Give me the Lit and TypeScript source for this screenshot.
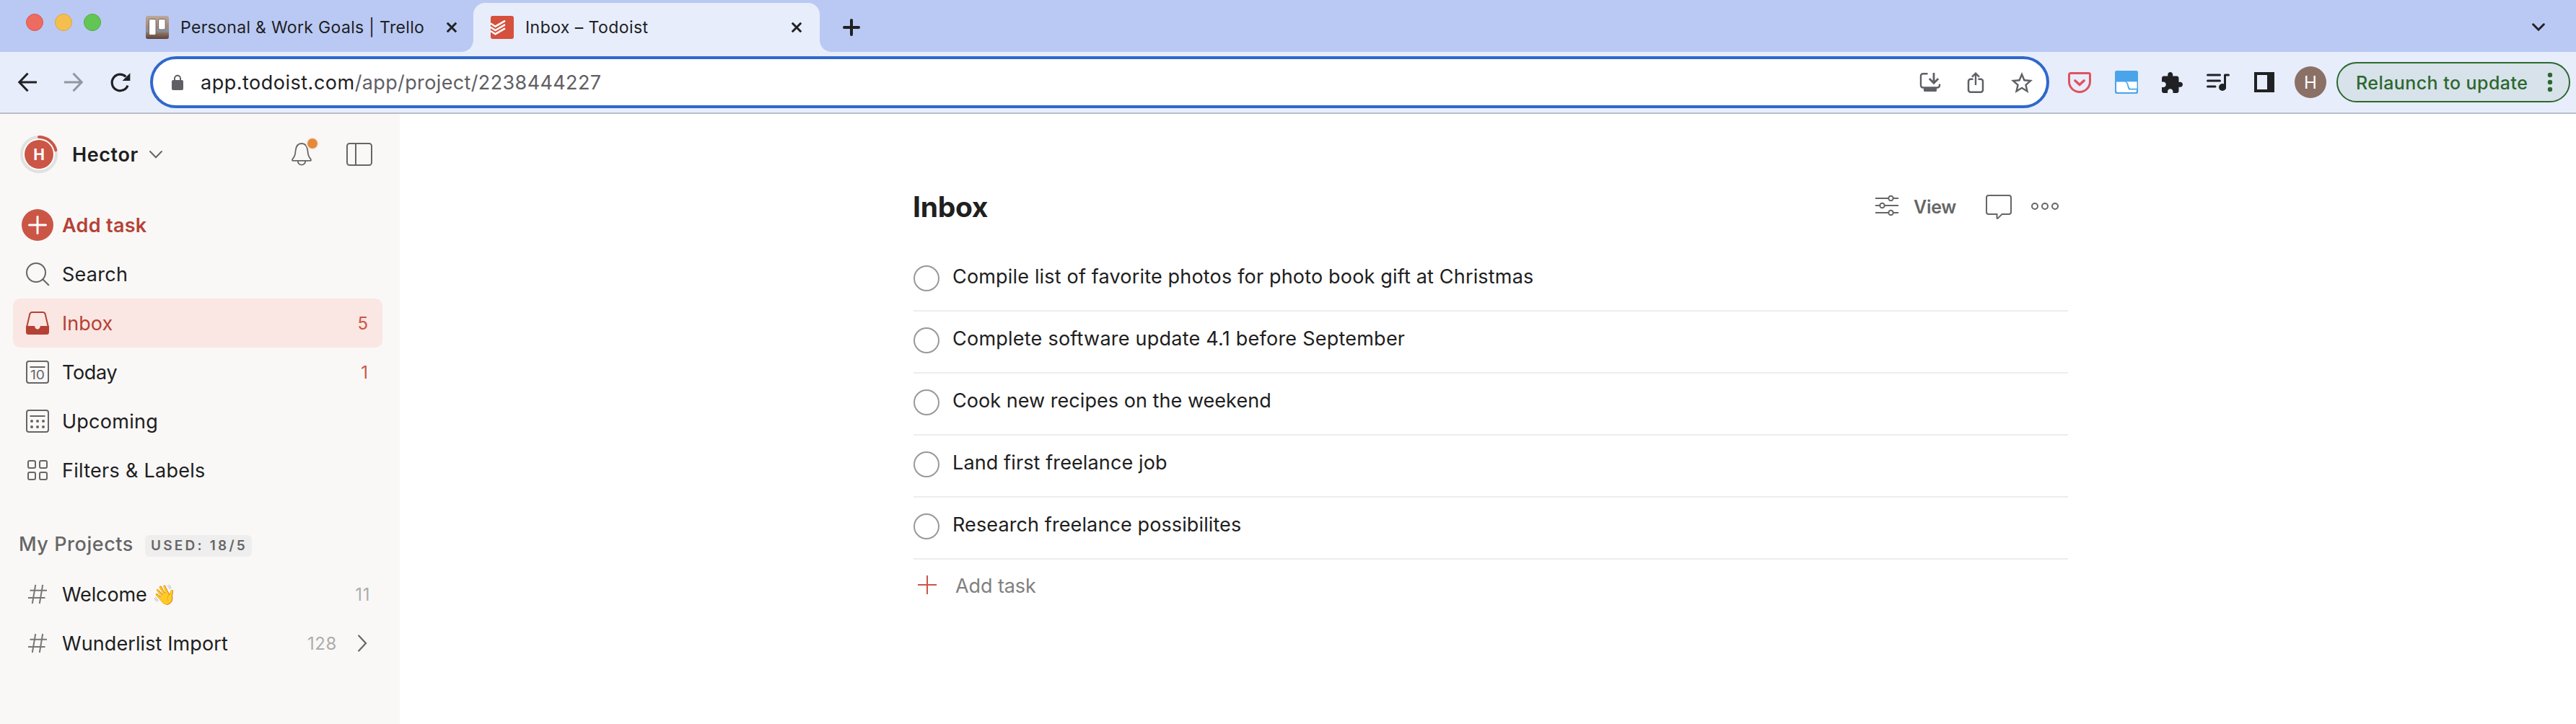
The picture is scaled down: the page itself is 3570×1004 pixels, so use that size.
import { LitElement, html, svg, css, nothing, TemplateResult } from "lit";
import { customElement } from "lit/decorators.js";
import { classMap } from "lit/directives/class-map.js";

const base = css`
  :host { display: block; font-family: Inter, "Liberation Sans", sans-serif; color: #202020; box-sizing: border-box; }
  * { box-sizing: border-box; }
  svg { display: block; flex: none; overflow: visible; fill: none; }
  .text { white-space: nowrap; }
`;

const icon = (w: number, h: number, body: TemplateResult, box = `0 0 ${w} ${h}`) =>
  html`<svg width=${w} height=${h} viewBox=${box} preserveAspectRatio="none">${body}</svg>`;

const tracked = (text: string, spacing: number) =>
  html`<span class="text" style="letter-spacing:${spacing}px">${text}</span>`;

/* ---------- Browser chrome ---------- */

const closeIcon = icon(16, 16, svg`<path d="M1.8 1.8 14.2 14.2M14.2 1.8 1.8 14.2" stroke="#202124" stroke-width="3"/>`);

const trelloIcon = icon(32, 32, svg`
  <defs><linearGradient id="sky" x1="0" y1="0" x2="0" y2="1">
    <stop offset="0" stop-color="#bda899"/><stop offset=".5" stop-color="#a3867a"/>
    <stop offset=".66" stop-color="#8791a0"/><stop offset=".78" stop-color="#8a6a55"/><stop offset="1" stop-color="#5b4340"/>
  </linearGradient></defs>
  <rect width="32" height="32" rx="3" fill="url(#sky)"/>
  <rect x="4.5" y="4.5" width="9.6" height="22" rx="2" fill="#fff" stroke="#6d625e"/>
  <rect x="17.6" y="4.5" width="9.6" height="14.5" rx="2" fill="#fff" stroke="#6d625e"/>`);

const todoistIcon = icon(32, 32, svg`
  <rect width="32" height="32" rx="3" fill="#d5503d"/>
  <path d="M0 10.5 6.5 14.7 20 6.8M0 15.8 6.5 20 20 12.1M0 21 6.5 25.2 20 17.4" stroke="#fff" stroke-width="2.5"/>`);

@customElement("tab-strip")
class TabStrip extends LitElement {
  static styles = [base, css`
    :host { height: 72px; background: #bac9f3; padding-top: 4px; }
    .strip { display: flex; align-items: center; height: 68px; }
    .lights { display: flex; gap: 16px; padding-left: 36px; margin: -14px 62px 0 0; }
    .light { width: 24px; height: 24px; border-radius: 50%; border: 1px solid #d8564c; background: #ed6b60; }
    .light.min { background: #f5bf50; border-color: #dba63c; }
    .light.max { background: #62c655; border-color: #51ab44; }
    .tab { display: flex; align-items: center; gap: 15px; height: 68px; font-size: 23px; line-height: 30px; width: 432px; color: #202124; }
    .tab .text { flex: 1; padding-left: 1px; }
    .tab.active { position: relative; width: 480px; margin-left: 22px; padding: 0 24px; background: #e7edfb; border-radius: 16px 16px 0 0; }
    .tab.active::before, .tab.active::after { content: ""; position: absolute; bottom: 0; width: 16px; height: 16px; }
    .tab.active::before { right: 100%; background: radial-gradient(circle at 0 0, transparent 15.5px, #e7edfb 16px); }
    .tab.active::after { left: 100%; background: radial-gradient(circle at 100% 0, transparent 15.5px, #e7edfb 16px); }
    .plus { margin-left: 32px; }
    .more { margin: 0 43px 0 auto; }
  `];
  render() {
    return html`<div class="strip">
      <div class="lights"><i class="light"></i><i class="light min"></i><i class="light max"></i></div>
      <div class="tab">${trelloIcon}${tracked("Personal & Work Goals | Trello", 0.33)}${closeIcon}</div>
      <div class="tab active">${todoistIcon}${tracked("Inbox – Todoist", 0.43)}${closeIcon}</div>
      <div class="plus">${icon(24, 24, svg`<path d="M12 2V22M2 12H22" stroke="#202124" stroke-width="4" stroke-linecap="round"/>`)}</div>
      <div class="more">${icon(18, 12, svg`<path d="M1.6 1.8 9 9.2 16.4 1.8" stroke="#202124" stroke-width="3" stroke-linecap="round"/>`)}</div>
    </div>`;
  }
}

@customElement("browser-toolbar")
class BrowserToolbar extends LitElement {
  static styles = [base, css`
    :host { display: flex; align-items: center; height: 86px; background: #e7edfb; border-bottom: 2px solid #b9bec9; padding-left: 25px; }
    .nav { display: flex; align-items: center; gap: 38px; width: 183px; }
    .omnibox { display: flex; align-items: center; width: 2632px; height: 72px; border: 4px solid #2f68cc; border-radius: 36px; background: #fff; padding: 0 19px 0 26px; }
    .url { flex: 1; margin-left: 24px; padding-top: 1px; font-size: 27px; line-height: 36px; color: #5f6065; white-space: nowrap; }
    .host { color: #202124; letter-spacing: .5px; }
    .path { letter-spacing: .37px; }
    .actions { display: flex; align-items: center; gap: 38px; }
    .extensions { display: flex; align-items: center; gap: 33px; margin-left: 26px; }
    .avatar { width: 44px; height: 44px; border-radius: 50%; background: #8b7065; color: #fff; display: grid; place-items: center; font-size: 24px; line-height: 30px; margin: 0 14px 0 29px; padding-top: 1px; }
    .relaunch { display: flex; align-items: center; justify-content: space-between; width: 324px; height: 56px; border: 2px solid #2b682f; border-radius: 28px; background: #d8e2ea; color: #2b682f; font-size: 25px; line-height: 32px; padding: 0 22px 0 25px; font-weight: 450; }
    .relaunch .text { padding-top: 1px; }
  `];
  render() {
    const gray = "#5f6065", ink = "#202124";
    return html`
      <div class="nav">
        ${icon(26, 26, svg`<path d="M26 13H2M13.5 .8 1.8 13 13.5 25.2" stroke=${ink} stroke-width="3"/>`)}
        ${icon(26, 26, svg`<path d="M0 13H24M12.5 .8 24.2 13 12.5 25.2" stroke="#9296a0" stroke-width="3"/>`)}
        ${icon(27, 26, svg`<path d="M24 17.6A11.3 11.3 0 1 1 21.4 5.4" stroke=${ink} stroke-width="3.2"/><path d="M27.4 .2V11H16.6Z" fill=${ink}/>`)}
      </div>
      <div class="omnibox">
        ${icon(16, 21, svg`<rect y="7" width="16" height="14" rx="2" fill=${gray}/><path d="M4 8V4.8a4 4 0 0 1 8 0V8" stroke=${gray} stroke-width="2"/>`)}
        <div class="url"><span class="host">app.todoist.com</span><span class="path">/app/project/2238444227</span></div>
        <div class="actions">
          ${icon(28, 26, svg`<path d="M10.5 1.2H4a3 3 0 0 0-3 3V17.5a3 3 0 0 0 3 3H24a3 3 0 0 0 3-3V15.5" stroke=${gray} stroke-width="2.4"/><path d="M5 21H23V24.5a1.5 1.5 0 0 1-1.5 1.5H6.5A1.5 1.5 0 0 1 5 24.5Z" fill=${gray}/><path d="M19 0V14M12.8 8 19 14.2 25.2 8" stroke=${gray} stroke-width="2.8"/>`)}
          ${icon(22, 29, svg`<path d="M7.5 9.8H4a3 3 0 0 0-3 3V24.8a3 3 0 0 0 3 3H18a3 3 0 0 0 3-3V12.8a3 3 0 0 0-3-3H14.5" stroke=${gray} stroke-width="2.5"/><path d="M11 18V2M6 6.6 11 1.6 16 6.6" stroke=${gray} stroke-width="2.4"/>`)}
          ${icon(30, 29, svg`<path fill=${gray} d="M22 9.24l-7.19-.62L12 2 9.19 8.63 2 9.24l5.46 4.73L5.82 21 12 17.27 18.18 21l-1.63-7.03L22 9.24zM12 15.4l-3.76 2.27 1-4.28-3.32-2.88 4.38-.38L12 6.1l1.71 4.04 4.38.38-3.32 2.88 1 4.28L12 15.4z"/>`, "2 2 20 19")}
        </div>
      </div>
      <div class="extensions">
        ${icon(32, 29, svg`<path d="M3.5 1.5H28.5a2 2 0 0 1 2 2V13a14.5 14.5 0 0 1-29 0V3.5a2 2 0 0 1 2-2Z" stroke="#e0525f" stroke-width="3"/><path d="M9.8 11.8 16 17.6 22.2 11.8" stroke="#e0525f" stroke-width="3.4" stroke-linecap="round" stroke-linejoin="round"/>`)}
        ${icon(32, 32, svg`<rect width="32" height="32" rx="2.5" fill="#4aa4e9"/><path d="M2 15.5H13.5C18 16 16.5 23 19.5 26.5H30V28a2 2 0 0 1-2 2H4a2 2 0 0 1-2-2Z" fill="#fff"/><path d="M16 15.3H30.5V24.7H21C18.5 23 19.5 17.5 16 15.3Z" fill="#fff"/>`)}
        ${icon(29, 29, svg`<path fill=${ink} d="M20.5 11H19V7c0-1.1-.9-2-2-2h-4V3.5C13 2.12 11.88 1 10.5 1S8 2.12 8 3.5V5H4c-1.1 0-1.99.9-1.99 2v3.8H3.5c1.49 0 2.7 1.21 2.7 2.7s-1.21 2.7-2.7 2.7H2V20c0 1.1.9 2 2 2h3.8v-1.5c0-1.49 1.21-2.7 2.7-2.7 1.49 0 2.7 1.21 2.7 2.7V22H17c1.1 0 2-.9 2-2v-4h1.5c1.38 0 2.5-1.12 2.5-2.5S21.88 11 20.5 11z"/>`, "2 1 21 21")}
        ${icon(32, 28, svg`<path d="M1.5 4H18.5M1.5 12H18.5M1.5 20H12" stroke=${ink} stroke-width="3" stroke-linecap="round"/><path d="M25.5 22V4H30.5" stroke=${ink} stroke-width="3" stroke-linecap="round" stroke-linejoin="round"/><circle cx="22" cy="21" r="5" fill=${ink}/>`)}
        ${icon(28, 28, svg`<rect x="1" width="28" height="28" fill=${ink}/><rect x="5" y="4" width="14" height="20" fill="#e7edfb"/>`)}
      </div>
      <div class="avatar">H</div>
      <div class="relaunch">${tracked("Relaunch to update", 0.44)}
        ${icon(8, 28, svg`<g fill="#2b682f"><circle cx="4" cy="4" r="3.2"/><circle cx="4" cy="14" r="3.2"/><circle cx="4" cy="24" r="3.2"/></g>`)}
      </div>`;
  }
}

/* ---------- Sidebar ---------- */

const line = "#666";
const red = "#b54234";

const icons: Record<string, TemplateResult> = {
  add: icon(44, 44, svg`<circle cx="22" cy="22" r="22" fill="#cb5646"/><path d="M22 10.5V33.5M10.5 22H33.5" stroke="#fff" stroke-width="3" stroke-linecap="round"/>`),
  search: icon(32, 32, svg`<circle cx="14" cy="14" r="13" stroke=${line} stroke-width="2"/><path d="M23.5 23.5 31.3 31.3" stroke=${line} stroke-width="2" stroke-linecap="round"/>`),
  inbox: icon(32, 32, svg`<path d="M1 22 5.2 4Q6 1 8.5 1H23.5Q26 1 26.8 4L31 22" stroke=${red} stroke-width="2"/><path d="M0 20H12C12.5 22 13 24.5 16 24.5S19.5 22 20 20H32V28.5A3.5 3.5 0 0 1 28.5 32H3.5A3.5 3.5 0 0 1 0 28.5Z" fill=${red}/>`),
  today: icon(32, 32, svg`<rect x="1" y="1" width="30" height="30" rx="3" stroke=${line} stroke-width="2"/><path d="M5.5 9H26.5" stroke=${line} stroke-width="2"/><text x="6" y="26" font-size="17" fill=${line} textLength="20" lengthAdjust="spacingAndGlyphs">10</text>`),
  upcoming: icon(32, 32, svg`<rect x="1" y="1" width="30" height="30" rx="3" stroke=${line} stroke-width="2"/><path d="M5.5 9H26.5" stroke=${line} stroke-width="2"/><g fill=${line}>${[8, 16, 24].map((x) => [16, 24].map((y) => svg`<circle cx=${x} cy=${y} r="2"/>`))}</g>`),
  filters: icon(28, 28, svg`<g stroke=${line} stroke-width="2">${[1, 17].map((x) => [1, 17].map((y) => svg`<rect x=${x} y=${y} width="10" height="10" rx="2"/>`))}</g>`),
  hash: icon(26, 26, svg`<path d="M10.2 0 5.8 26M20.2 0 15.8 26M2.5 7.8H26M0 18H23.5" stroke="#777" stroke-width="2"/>`),
};

interface NavItem { icon: string; label: string; spacing: number; kind?: string; count?: string; more?: boolean; }

const views: NavItem[] = [
  { icon: "add", label: "Add task", spacing: 0.3, kind: "add" },
  { icon: "search", label: "Search", spacing: 0.27 },
  { icon: "inbox", label: "Inbox", spacing: 0.04, kind: "current", count: "5" },
  { icon: "today", label: "Today", spacing: -0.32, count: "1" },
  { icon: "upcoming", label: "Upcoming", spacing: 0.25 },
  { icon: "filters", label: "Filters & Labels", spacing: 0.27 },
];
const projects: NavItem[] = [
  { icon: "hash", label: "Welcome 👋", spacing: -0.13, kind: "project", count: "11" },
  { icon: "hash", label: "Wunderlist Import", spacing: 0.1, kind: "project", count: "128", more: true },
];

@customElement("side-bar")
class SideBar extends LitElement {
  static styles = [base, css`
    :host { width: 554px; background: #f9f8f7; padding-top: 30px; }
    .user { display: flex; align-items: center; height: 52px; padding: 0 38px 0 28px; margin-bottom: 38px; }
    .initial { font-size: 21px; font-weight: 700; fill: #fff; }
    .name { margin: 0 15px 0 20px; padding-top: 2px; font-size: 27px; font-weight: 600; line-height: 36px; }
    .bell { margin: 0 48px 0 auto; }
    .row { display: flex; align-items: center; height: 68px; margin: 0 24px 0 18px; padding: 0 20px 0 12px; border-radius: 10px; font-size: 27px; line-height: 36px; }
    .glyph { width: 44px; display: grid; place-items: center; margin-right: 12px; }
    .label { flex: 1; white-space: pre; padding-top: 2px; }
    .row.add { color: #b54234; font-weight: 600; }
    .row.current { background: #fae6e3; color: #b54234; }
    .count { font-size: 24px; line-height: 32px; color: #cb5646; padding-top: 2px; }
    .project .count { color: #adadad; letter-spacing: .6px; }
    .row.project { padding-right: 17px; }
    .chevron { margin: 0 5px 0 29px; }
    .section { display: flex; align-items: center; height: 70px; margin-top: 34px; padding-left: 26px; color: #666; font-size: 27px; font-weight: 500; line-height: 36px; }
    .badge { width: 148px; height: 30px; margin: 4px 0 0 16px; border-radius: 6px; background: #eee; padding-left: 8px; font-size: 19px; font-weight: 600; line-height: 30px; }
  `];
  row(item: NavItem) {
    return html`<div class=${classMap({ row: true, [item.kind ?? "plain"]: true })}>
      <div class="glyph">${icons[item.icon]}</div>
      <div class="label">${tracked(item.label, item.spacing)}</div>
      ${item.count ? html`<div class="count">${item.count}</div>` : nothing}
      ${item.more ? html`<div class="chevron">${icon(12, 24, svg`<path d="M1.2 1.5 11 12 1.2 22.5" stroke=${line} stroke-width="2.2" stroke-linecap="round"/>`)}</div>` : nothing}
    </div>`;
  }
  render() {
    return html`
      <div class="user">
        ${icon(52, 52, svg`<circle cx="26" cy="26" r="22" fill="#fff"/><circle cx="26" cy="26" r="24" stroke="#e1e1e1" stroke-width="4"/>
          <circle cx="26" cy="26" r="20" fill="#cb5646"/><path d="M26 2A24 24 0 0 1 49.3 20.2" stroke="#cb5646" stroke-width="4" stroke-linecap="round"/>
          <text class="initial" x="26" y="33.5" text-anchor="middle">H</text>`)}
        <div class="name">${tracked("Hector", 0.6)}</div>
        ${icon(18, 10, svg`<path d="M1 1 9 9.2 17 1" stroke=${line} stroke-width="2" stroke-linecap="round"/>`)}
        <div class="bell">${icon(28, 32, svg`<path d="M14 1C8 1 6 5.5 5.5 11.5 5.2 17 4.3 19.5 1.8 22 .5 23.6.8 24.8 2.2 24.8H25.8C27.2 24.8 27.5 23.6 26.2 22 23.7 19.5 22.8 17 22.5 11.5 22 5.5 20 1 14 1ZM8.8 25.5a5.2 5.2 0 0 0 10.4 0" stroke=${line} stroke-width="1.8"/><circle cx="29" cy="1" r="9" fill="#f9eee8"/><circle cx="29" cy="1" r="7" fill="#e5893a"/>`)}</div>
        ${icon(36, 32, svg`<rect x="1" y="1" width="34" height="30" rx="3.5" stroke=${line} stroke-width="2"/><path d="M13 1V31" stroke=${line} stroke-width="2"/>`)}
      </div>
      ${views.map((v) => this.row(v))}
      <div class="section">${tracked("My Projects", 0.55)}<div class="badge">${tracked("USED: 18/5", 3.24)}</div></div>
      ${projects.map((p) => this.row(p))}`;
  }
}

/* ---------- Task list ---------- */

const tasks: [string, number][] = [
  ["Compile list of favorite photos for photo book gift at Christmas", 0.175],
  ["Complete software update 4.1 before September", 0.235],
  ["Cook new recipes on the weekend", 0.045],
  ["Land first freelance job", 0.12],
  ["Research freelance possibilites", 0.11],
];

@customElement("task-list")
class TaskList extends LitElement {
  static styles = [base, css`
    :host { flex: 1; background: #fff; padding: 99px 704px 0 711px; font-size: 27px; line-height: 40px; }
    .head { display: flex; align-items: center; height: 60px; margin-bottom: 29px; padding-right: 13px; }
    .title { flex: 1; font-size: 39px; font-weight: 700; line-height: 48px; }
    .sliders { margin: 0 21px 4px 0; }
    .view { width: 59px; margin-right: 41px; color: #666; font-size: 25px; font-weight: 600; line-height: 32px; }
    .dots { margin: 0 0 2px 27px; }
    .task { display: flex; height: 86px; margin-left: 1px; border-bottom: 2px solid #ededed; }
    .check { width: 36px; height: 36px; margin: 22px 18px 0 0; border: 2px solid #999; border-radius: 50%; }
    .task .text { margin-top: 18px; }
    .new { display: flex; align-items: center; gap: 26px; height: 70px; padding-left: 7px; color: #808080; }
    .new .text { padding-top: 4px; }
  `];
  render() {
    return html`
      <div class="head">
        <div class="title">${tracked("Inbox", -0.3)}</div>
        <div class="sliders">${icon(32, 28, svg`<g stroke=${line} stroke-width="2"><path d="M0 4H18M25 4H32M0 14H6M13 14H32M0 24H18M25 24H32"/><circle cx="21.5" cy="4" r="3.2"/><circle cx="9.5" cy="14" r="3.2"/><circle cx="21.5" cy="24" r="3.2"/></g>`)}</div>
        <div class="view">${tracked("View", -0.3)}</div>
        ${icon(36, 34, svg`<path d="M4 1H32a3 3 0 0 1 3 3V24a3 3 0 0 1-3 3H22.5L16.8 32.6Q15.5 33.6 15.5 32V27H4a3 3 0 0 1-3-3V4a3 3 0 0 1 3-3Z" stroke=${line} stroke-width="2"/>`)}
        <div class="dots">${icon(38, 10, svg`<g stroke=${line} stroke-width="2"><circle cx="5" cy="5" r="4"/><circle cx="19" cy="5" r="4"/><circle cx="33" cy="5" r="4"/></g>`)}</div>
      </div>
      ${tasks.map(([title, spacing]) => html`<div class="task"><i class="check"></i>${tracked(title, spacing)}</div>`)}
      <div class="new">${icon(26, 26, svg`<path d="M13 0V26M0 13H26" stroke="#cb5646" stroke-width="2"/>`)}${tracked("Add task", -0.09)}</div>`;
  }
}

@customElement("app-root")
class AppRoot extends LitElement {
  static styles = [base, css`
    :host { width: 100%; height: 1004px; overflow: hidden; background: #fff; }
    .page { display: flex; height: 846px; }
  `];
  render() {
    return html`<tab-strip></tab-strip><browser-toolbar></browser-toolbar>
      <div class="page"><side-bar></side-bar><task-list></task-list></div>`;
  }
}
